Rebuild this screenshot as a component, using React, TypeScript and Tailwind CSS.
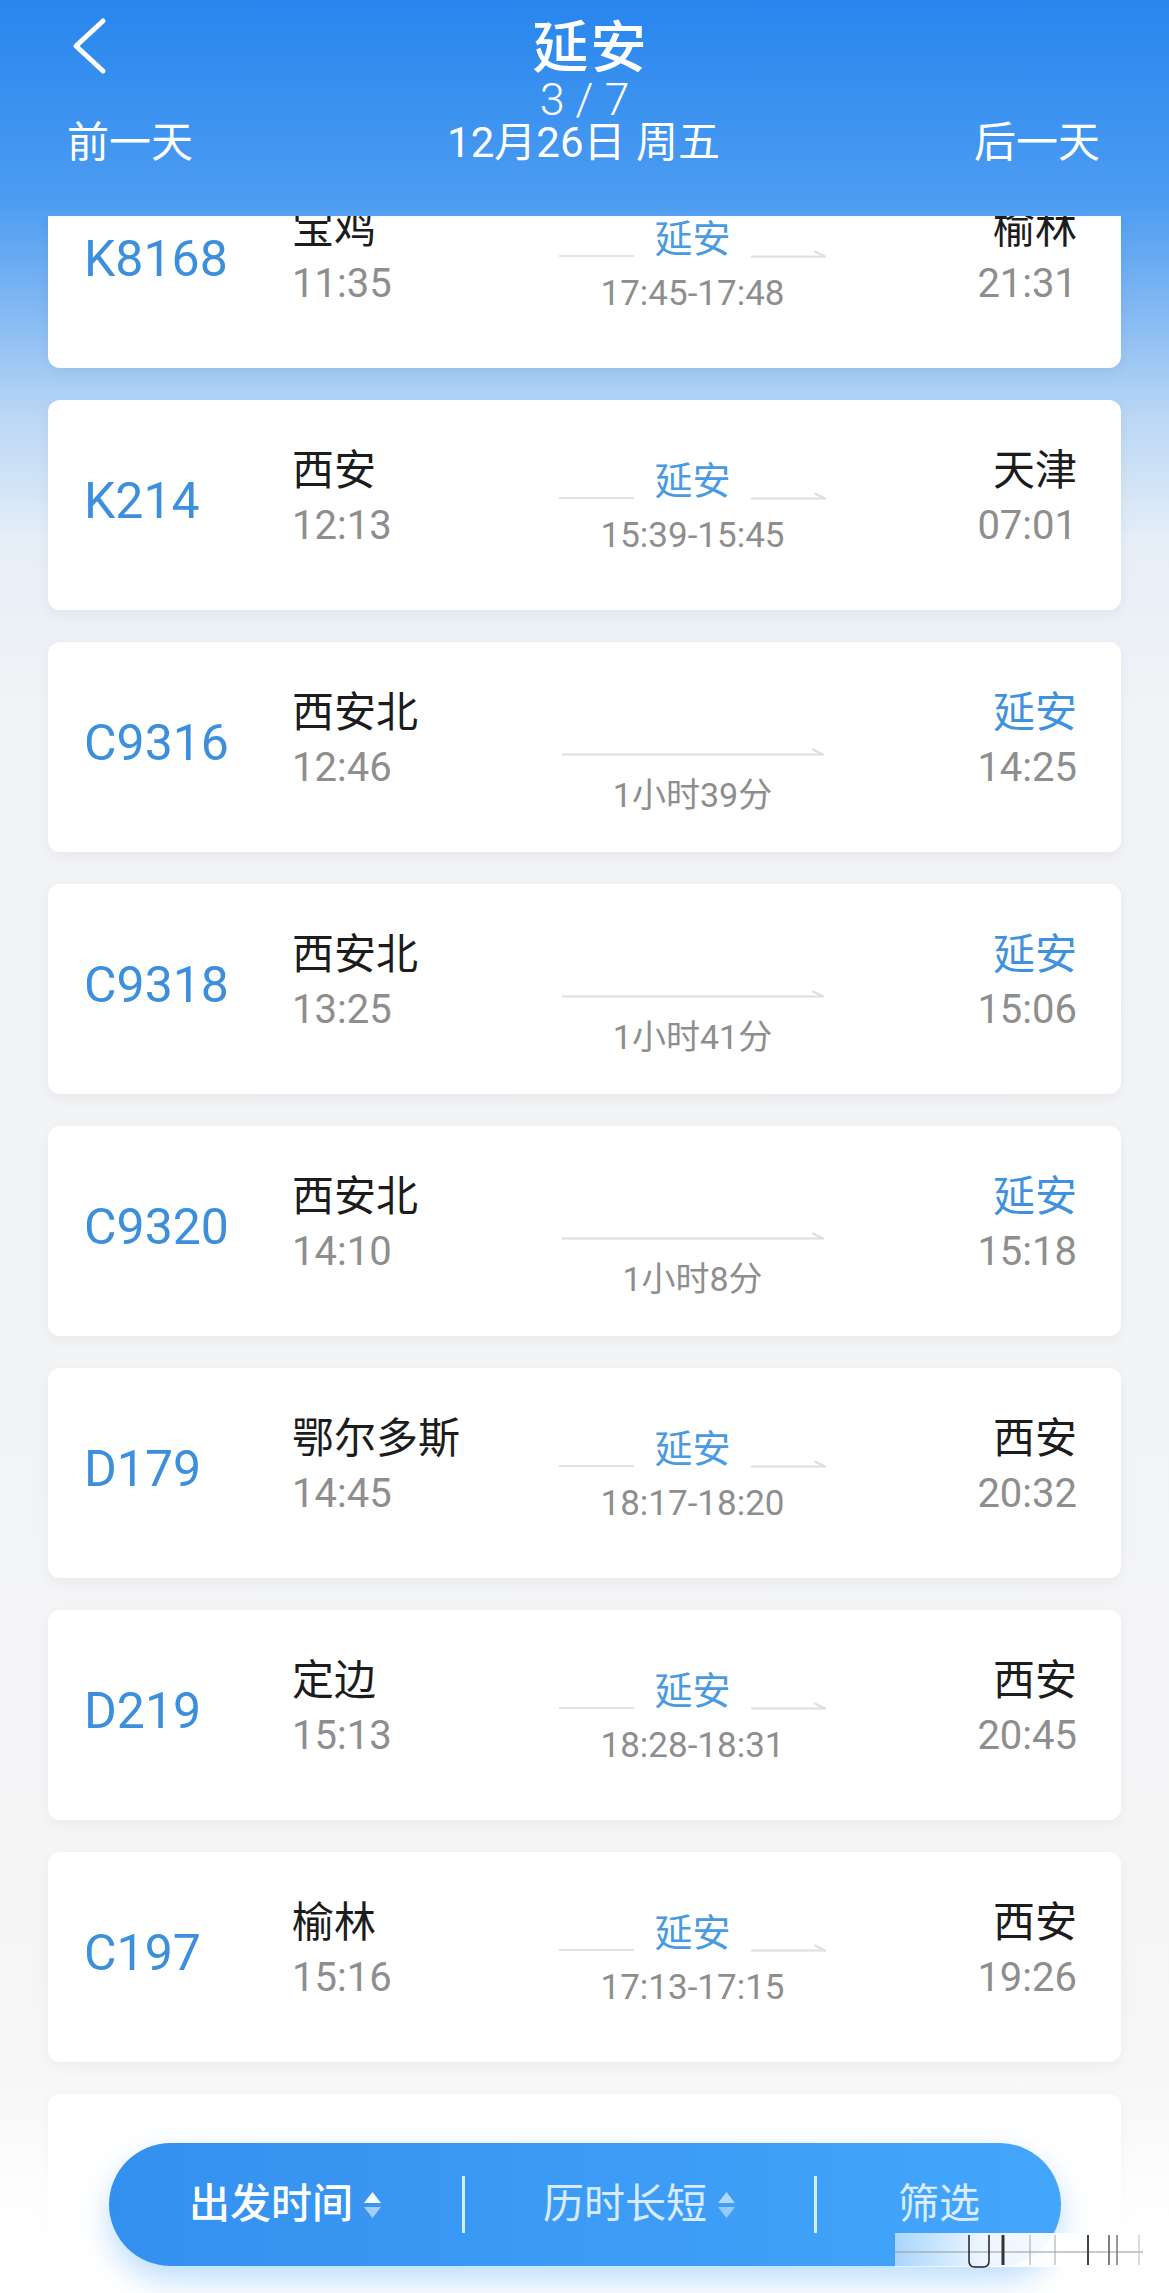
import React from "react";

type Train = {
  no: string;
  from: string;
  dep: string;
  to: string;
  arr: string;
  via?: string;
  range?: string;
  dur?: string;
};

const trains: Train[] = [
  { no: "K8168", from: "宝鸡", dep: "11:35", via: "延安", range: "17:45-17:48", to: "榆林", arr: "21:31" },
  { no: "K214", from: "西安", dep: "12:13", via: "延安", range: "15:39-15:45", to: "天津", arr: "07:01" },
  { no: "C9316", from: "西安北", dep: "12:46", dur: "1小时39分", to: "延安", arr: "14:25" },
  { no: "C9318", from: "西安北", dep: "13:25", dur: "1小时41分", to: "延安", arr: "15:06" },
  { no: "C9320", from: "西安北", dep: "14:10", dur: "1小时8分", to: "延安", arr: "15:18" },
  { no: "D179", from: "鄂尔多斯", dep: "14:45", via: "延安", range: "18:17-18:20", to: "西安", arr: "20:32" },
  { no: "D219", from: "定边", dep: "15:13", via: "延安", range: "18:28-18:31", to: "西安", arr: "20:45" },
  { no: "C197", from: "榆林", dep: "15:16", via: "延安", range: "17:13-17:15", to: "西安", arr: "19:26" },
];

function ArrowLine({ width }: { width: number }) {
  return (
    <svg width={width} height="10" viewBox={`0 0 ${width} 10`} className="block">
      <line x1="0" y1="8.5" x2={width - 1} y2="8.5" stroke="#dedede" strokeWidth="2" />
      <line x1={width - 1} y1="8.5" x2={width - 11} y2="3.5" stroke="#dedede" strokeWidth="2" strokeLinecap="round" />
    </svg>
  );
}

function Card({ t }: { t: Train }) {
  const direct = !!t.dur;
  return (
    <div className="h-[210px] shrink-0 rounded-[12px] bg-white shadow-[0_4px_14px_rgba(0,0,0,0.05)] flex pl-[36px] pr-[44px]">
      <div className="w-[208px] pt-[76px] text-[50px] leading-[50px] text-[#3b8fdd]">{t.no}</div>
      <div className="w-[267px] flex flex-col pt-[50px]">
        <div className="text-[42px] leading-[42px] text-[#1c1c1c] whitespace-nowrap">{t.from}</div>
        <div className="mt-[14px] text-[40px] leading-[40px] text-[#8e8e8e]">{t.dep}</div>
      </div>
      {direct ? (
        <div className="w-[267px] flex flex-col items-center pt-[104px]">
          <ArrowLine width={262} />
          <div className="mt-[22px] text-[34px] leading-[34px] text-[#8e8e8e] whitespace-nowrap">{t.dur}</div>
        </div>
      ) : (
        <div className="w-[267px] flex flex-col items-center pt-[62px]">
          <div className="w-full h-[38px] flex items-end justify-between">
            <div className="w-[75px] h-[2px] bg-[#e2e2e2] mb-[1px]" />
            <div className="text-[38px] leading-[38px] text-[#4a9ae2] whitespace-nowrap">{t.via}</div>
            <div className="w-[75px]">
              <ArrowLine width={75} />
            </div>
          </div>
          <div className="mt-[18px] text-[35px] leading-[35px] text-[#8e8e8e] whitespace-nowrap">{t.range}</div>
        </div>
      )}
      <div className="flex-1 flex flex-col items-end pt-[50px]">
        <div className={`text-[42px] leading-[42px] whitespace-nowrap ${direct ? "text-[#3f92de]" : "text-[#1c1c1c]"}`}>{t.to}</div>
        <div className="mt-[14px] text-[40px] leading-[40px] text-[#8e8e8e]">{t.arr}</div>
      </div>
    </div>
  );
}

function SortIcon({ dim }: { dim?: boolean }) {
  return (
    <svg width="19" height="28" viewBox="0 0 19 28" className="block">
      <path d="M9.5 1 L18 12 L1 12 Z" fill="#ffffff" fillOpacity={dim ? 0.6 : 0.95} />
      <path d="M1 16 L18 16 L9.5 27 Z" fill="#ffffff" fillOpacity={dim ? 0.45 : 0.55} />
    </svg>
  );
}

export default function App() {
  return (
    <div className="relative w-[1169px] h-[2293px] overflow-hidden font-[Roboto,'Noto_Sans_CJK_SC',sans-serif] bg-[linear-gradient(180deg,#2886ee_0px,#4c9cf1_200px,#7db6f3_300px,#bcd8f5_420px,#e6eef8_540px,#f1f3f6_700px,#f3f4f6_1400px,#f6f6f7_2000px,#fbfbfb_2293px)]">
      {/* Header */}
      <div className="h-[216px] flex flex-col text-white">
        <div className="grid grid-cols-[1fr_auto_1fr] pt-[20px]">
          <div className="pl-[70px] mt-[-4px]">
            <svg width="40" height="60" viewBox="0 0 40 60" className="block">
              <path d="M33 5 L6 30 L33 55" fill="none" stroke="#ffffff" strokeWidth="5" strokeLinecap="round" strokeLinejoin="round" />
            </svg>
          </div>
          <div className="pl-[12px] text-[56px] leading-[56px] font-medium tracking-[2px]">延安</div>
          <div />
        </div>
        <div className="mt-[1px] text-center text-[45px] leading-[45px] font-light">3 / 7</div>
        <div className="grid grid-cols-3 pl-[67px] pr-[69px] text-[42px] leading-[42px]">
          <div className="text-left">前一天</div>
          <div className="text-center whitespace-nowrap">12月26日 周五</div>
          <div className="text-right">后一天</div>
        </div>
      </div>

      {/* List */}
      <div className="h-[2077px] overflow-hidden px-[48px]">
        <div className="flex flex-col gap-[32px] mt-[-58px]">
          {trains.map((t) => (
            <Card key={t.no} t={t} />
          ))}
          <div className="h-[210px] shrink-0 rounded-[12px] bg-white shadow-[0_4px_14px_rgba(0,0,0,0.05)]" />
        </div>
      </div>

      {/* bottom fade */}
      <div className="absolute left-0 right-0 bottom-0 h-[200px] bg-[linear-gradient(180deg,rgba(255,255,255,0)_0%,rgba(255,255,255,0.85)_60%,#ffffff_100%)]" />

      {/* Bottom bar */}
      <div className="absolute left-[109px] top-[2143px] w-[952px] h-[123px] rounded-full bg-[linear-gradient(90deg,#3490ef,#43a6fb)] shadow-[0_14px_30px_rgba(64,160,250,0.35)] flex items-center text-white text-[41px] leading-[41px]">
        <div className="w-[353px] flex items-center justify-center gap-[10px]">
          <span className="font-medium">出发时间</span>
          <SortIcon />
        </div>
        <div className="w-[3px] h-[57px] bg-white/80" />
        <div className="w-[349px] flex items-center justify-center gap-[10px] text-white/80">
          <span>历时长短</span>
          <SortIcon dim />
        </div>
        <div className="w-[3px] h-[57px] bg-white/80" />
        <div className="flex-1 flex items-center justify-center text-white/80">
          <span>筛选</span>
        </div>
      </div>

      {/* watermark remnant */}
      <svg className="absolute left-[895px] top-[2233px]" width="250" height="36" viewBox="0 0 250 36">
        <defs>
          <linearGradient id="wm" x1="0" x2="1" y1="0" y2="0">
            <stop offset="0" stopColor="#ffffff" stopOpacity="0.55" />
            <stop offset="0.35" stopColor="#ffffff" stopOpacity="0.9" />
            <stop offset="1" stopColor="#ffffff" stopOpacity="1" />
          </linearGradient>
        </defs>
        <rect x="0" y="0" width="248" height="34" fill="url(#wm)" />
        <line x1="0" y1="19" x2="248" y2="19" stroke="#9a9a9a" strokeWidth="1.5" strokeOpacity="0.7" />
        <path d="M74 2 L74 28 Q74 34 80 34 L88 34 Q94 34 94 28 L94 2" fill="none" stroke="#222" strokeWidth="1.5" />
        <line x1="108" y1="2" x2="108" y2="32" stroke="#333" strokeWidth="3" />
        <line x1="135" y1="2" x2="135" y2="32" stroke="#999" strokeWidth="1.5" strokeOpacity="0.6" />
        <line x1="160" y1="2" x2="160" y2="32" stroke="#999" strokeWidth="1.5" strokeOpacity="0.6" />
        <line x1="193" y1="2" x2="193" y2="32" stroke="#444" strokeWidth="2" />
        <line x1="214" y1="2" x2="214" y2="32" stroke="#555" strokeWidth="1.5" />
        <line x1="222" y1="2" x2="222" y2="32" stroke="#777" strokeWidth="1.5" />
        <line x1="244" y1="2" x2="244" y2="32" stroke="#bbb" strokeWidth="1" />
      </svg>
    </div>
  );
}
